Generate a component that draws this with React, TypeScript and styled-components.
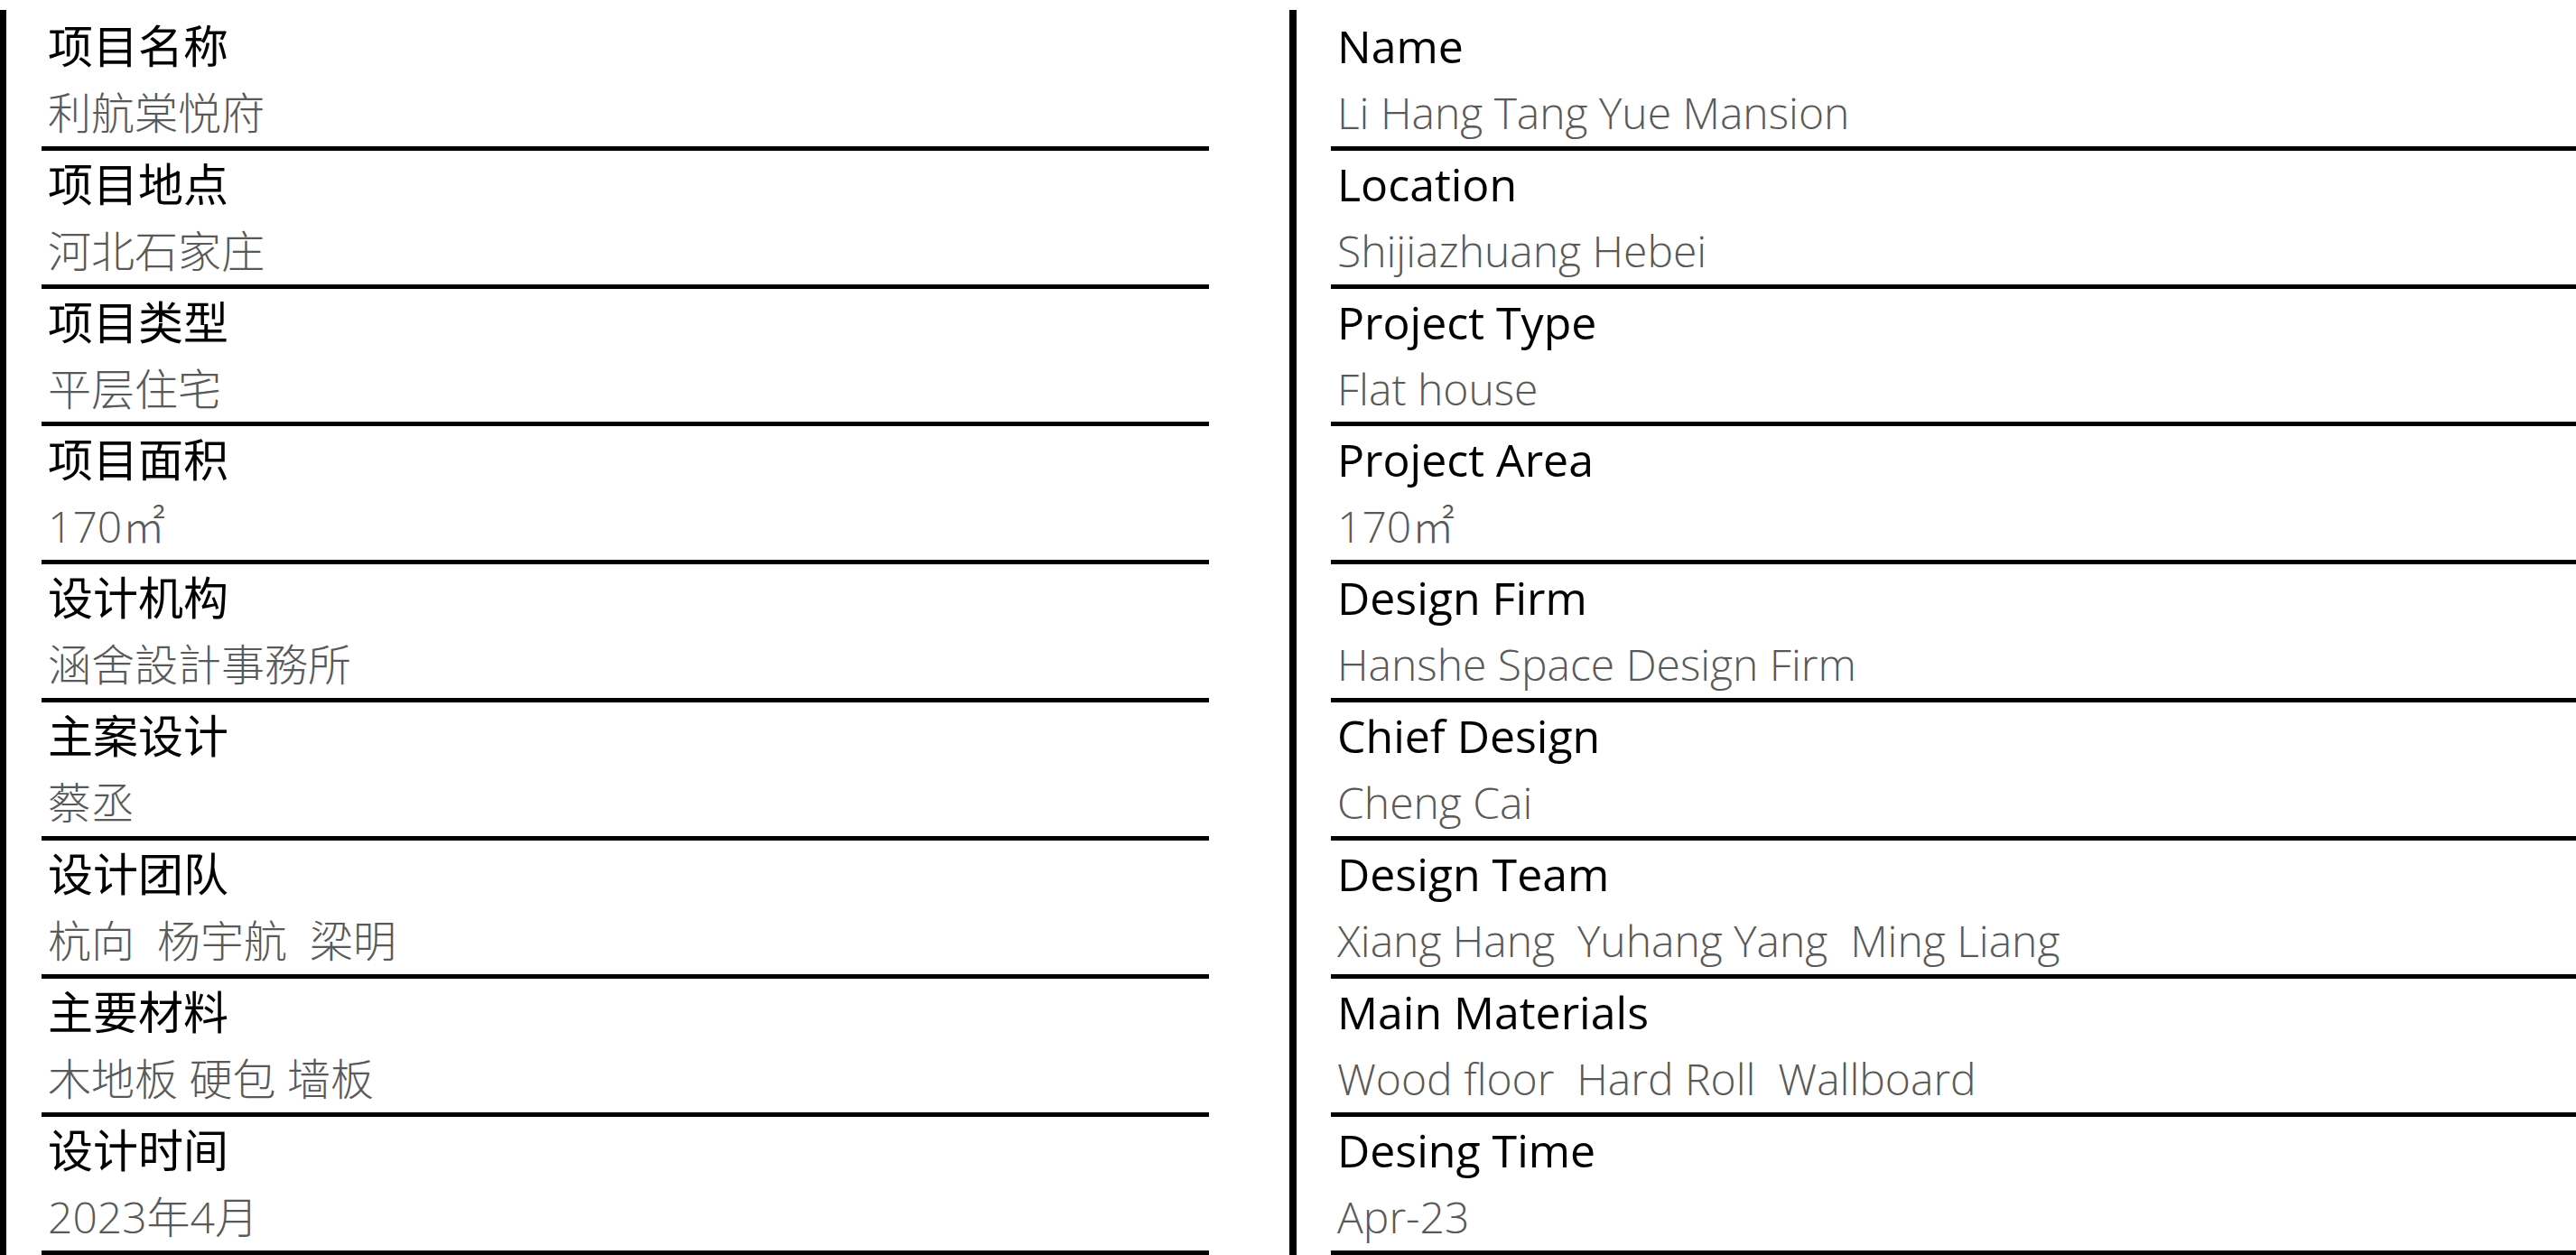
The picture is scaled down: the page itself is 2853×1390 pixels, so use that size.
import React from "react";
import styled, { createGlobalStyle } from "styled-components";

const GlobalStyle = createGlobalStyle`
  html, body {
    margin: 0;
    padding: 0;
    background: #ffffff;
    overflow: hidden;
  }
  body {
    font-family: "Open Sans", "Noto Sans CJK SC", sans-serif;
    color: #000000;
  }
`;

const Page = styled.main`
  display: flex;
  width: 2853px;
  height: 1390px;
  box-sizing: border-box;
  padding-top: 11px;
  overflow: hidden;
`;

const Column = styled.section<{ $bar: number; $gap: number; $offset: number; $width?: number }>`
  display: flex;
  flex-direction: column;
  box-sizing: border-box;
  border-left: ${(p) => p.$bar}px solid #000000;
  margin-left: ${(p) => p.$offset}px;
  padding-left: ${(p) => p.$gap}px;
  padding-top: 2.8px;
  ${(p) => (p.$width ? `flex: 0 0 ${p.$width}px;` : `flex: 1 1 auto;`)}
  min-width: 0;
`;

const Row = styled.div`
  flex: 0 0 auto;
  height: 152.86px;
  box-sizing: border-box;
  border-bottom: 5px solid #000000;
  padding-left: 7px;
`;

const Label = styled.div<{ $size: number }>`
  height: 75px;
  font-size: ${(p) => p.$size}px;
  line-height: ${(p) => 114 - 0.776 * p.$size}px;
  font-weight: 400;
  color: #000000;
  white-space: pre;
`;

const Value = styled.div<{ $size: number }>`
  font-size: ${(p) => p.$size}px;
  line-height: ${(p) => 110 - 0.776 * p.$size}px;
  font-weight: 300;
  color: #595959;
  white-space: pre;
`;

type Item = { label: string; value: string };

const zh: Item[] = [
  { label: "项目名称", value: "利航棠悦府" },
  { label: "项目地点", value: "河北石家庄" },
  { label: "项目类型", value: "平层住宅" },
  { label: "项目面积", value: "170㎡" },
  { label: "设计机构", value: "涵舍設計事務所" },
  { label: "主案设计", value: "蔡丞" },
  { label: "设计团队", value: "杭向  杨宇航  梁明" },
  { label: "主要材料", value: "木地板 硬包 墙板" },
  { label: "设计时间", value: "2023年4月" },
];

const en: Item[] = [
  { label: "Name", value: "Li Hang Tang Yue Mansion" },
  { label: "Location", value: "Shijiazhuang Hebei" },
  { label: "Project Type", value: "Flat house" },
  { label: "Project Area", value: "170㎡" },
  { label: "Design Firm", value: "Hanshe Space Design Firm" },
  { label: "Chief Design", value: "Cheng Cai" },
  { label: "Design Team", value: "Xiang Hang  Yuhang Yang  Ming Liang" },
  { label: "Main Materials", value: "Wood floor  Hard Roll  Wallboard" },
  { label: "Desing Time", value: "Apr-23" },
];

const InfoList: React.FC<{ items: Item[]; labelSize: number; valueSize: number }> = ({
  items,
  labelSize,
  valueSize,
}) => (
  <>
    {items.map((it) => (
      <Row key={it.label}>
        <Label $size={labelSize}>{it.label}</Label>
        <Value $size={valueSize}>{it.value}</Value>
      </Row>
    ))}
  </>
);

export default function App() {
  return (
    <>
      <GlobalStyle />
      <Page>
        <Column $bar={7} $gap={39} $offset={0} $width={1339}>
          <InfoList items={zh} labelSize={50} valueSize={48} />
        </Column>
        <Column $bar={8} $gap={38} $offset={89}>
          <InfoList items={en} labelSize={50} valueSize={48} />
        </Column>
      </Page>
    </>
  );
}
